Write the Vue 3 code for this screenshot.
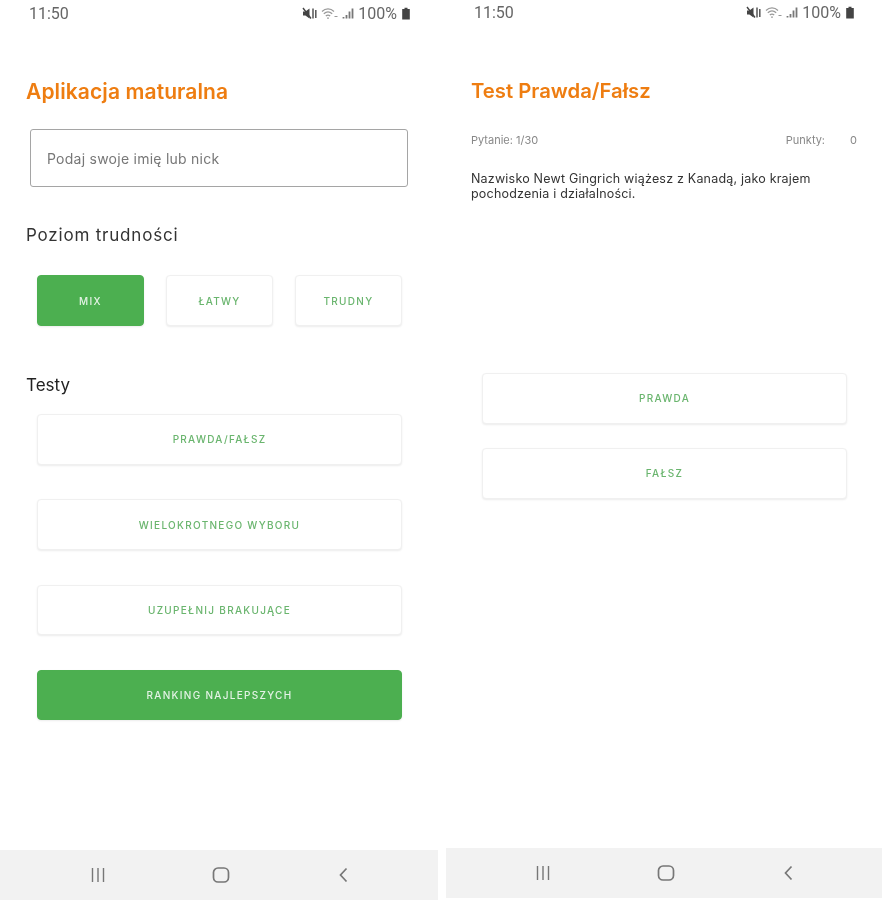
<template>
  <div class="screens">
    <section class="phone phone-left">
      <div class="status-bar">
        <span class="time">11:50</span>
        <div class="status-icons">
          <svg width="15" height="13" viewBox="0 0 15 13"><path d="M1 4.500h2.400L7.500 1.500v10L3.400 8.500H1z" fill="#444"/><path d="M1 1l8 10.500" stroke="#444" stroke-width="1.400"/><path d="M11 1.500v10M13.800 3v8" stroke="#555" stroke-width="1.500"/></svg>
          <svg width="17" height="13" viewBox="0 0 17 13" fill="none" stroke="#999"><path d="M1 4.500C4.500 1 9.500 1 13 4.500M2.800 6.800c2.600-2.400 5.800-2.400 8.400 0M4.800 9c1.400-1.200 3-1.200 4.400 0" stroke-width="1.200"/><path d="M7 11.800v-1.200" stroke-width="1.800"/><path d="M13.500 9.500h3" stroke-width="1"/></svg>
          <svg width="12" height="13" viewBox="0 0 12 13"><path d="M1.500 11.500V10M4.500 11.500V8M7.500 11.500V4.500M10.500 11.500V1.500" stroke="#777" stroke-width="1.800"/></svg>
          <span class="battery-label">100%</span>
          <svg width="10" height="13" viewBox="0 0 10 13"><path d="M3.500.8h3V2h2.300v10.500H1.200V2h2.300z" fill="#444"/></svg>
        </div>
      </div>

      <h1 class="title">Aplikacja maturalna</h1>
      <div class="nick-input">Podaj swoje imię lub nick</div>

      <h2 class="label label-level">Poziom trudności</h2>
      <div class="levels">
        <button v-for="level in levels" :key="level" class="btn" :class="{ filled: level === 'MIX' }">{{ level }}</button>
      </div>

      <h2 class="label label-tests">Testy</h2>
      <div class="tests">
        <button v-for="test in tests" :key="test" class="btn">{{ test }}</button>
        <button class="btn filled">RANKING NAJLEPSZYCH</button>
      </div>

      <nav class="nav-bar">
        <svg width="18" height="16" viewBox="0 0 18 16" fill="none" stroke="#777" stroke-width="1.400"><path d="M3.500 1v14M9 1v14M14.500 1v14"/></svg>
        <svg width="18" height="16" viewBox="0 0 18 16" fill="none" stroke="#777" stroke-width="1.700"><rect x="1.500" y="1" width="15" height="14" rx="4.500"/></svg>
        <svg width="18" height="16" viewBox="0 0 18 16" fill="none" stroke="#777" stroke-width="1.700"><path d="M11.500 1.500L5.500 8l6 6.500"/></svg>
      </nav>
    </section>

    <section class="phone phone-right">
      <div class="status-bar">
        <span class="time">11:50</span>
        <div class="status-icons">
          <svg width="15" height="13" viewBox="0 0 15 13"><path d="M1 4.500h2.400L7.500 1.500v10L3.400 8.500H1z" fill="#444"/><path d="M1 1l8 10.500" stroke="#444" stroke-width="1.400"/><path d="M11 1.500v10M13.800 3v8" stroke="#555" stroke-width="1.500"/></svg>
          <svg width="17" height="13" viewBox="0 0 17 13" fill="none" stroke="#999"><path d="M1 4.500C4.500 1 9.500 1 13 4.500M2.800 6.800c2.600-2.400 5.800-2.400 8.400 0M4.800 9c1.400-1.200 3-1.200 4.400 0" stroke-width="1.200"/><path d="M7 11.800v-1.200" stroke-width="1.800"/><path d="M13.500 9.500h3" stroke-width="1"/></svg>
          <svg width="12" height="13" viewBox="0 0 12 13"><path d="M1.500 11.500V10M4.500 11.500V8M7.500 11.500V4.500M10.500 11.500V1.500" stroke="#777" stroke-width="1.800"/></svg>
          <span class="battery-label">100%</span>
          <svg width="10" height="13" viewBox="0 0 10 13"><path d="M3.500.8h3V2h2.300v10.500H1.200V2h2.300z" fill="#444"/></svg>
        </div>
      </div>

      <h1 class="title">Test Prawda/Fałsz</h1>
      <div class="quiz-meta">
        <span>Pytanie: 1/30</span>
        <span class="score"><span>Punkty:</span><span>0</span></span>
      </div>
      <p class="question">Nazwisko Newt Gingrich wiążesz z Kanadą, jako krajem pochodzenia i działalności.</p>

      <div class="answers">
        <button class="btn">PRAWDA</button>
        <button class="btn">FAŁSZ</button>
      </div>

      <nav class="nav-bar">
        <svg width="18" height="16" viewBox="0 0 18 16" fill="none" stroke="#777" stroke-width="1.400"><path d="M3.500 1v14M9 1v14M14.500 1v14"/></svg>
        <svg width="18" height="16" viewBox="0 0 18 16" fill="none" stroke="#777" stroke-width="1.700"><rect x="1.500" y="1" width="15" height="14" rx="4.500"/></svg>
        <svg width="18" height="16" viewBox="0 0 18 16" fill="none" stroke="#777" stroke-width="1.700"><path d="M11.500 1.500L5.500 8l6 6.500"/></svg>
      </nav>
    </section>
  </div>
</template>

<script setup>
const levels = ['MIX', 'ŁATWY', 'TRUDNY']
const tests = ['PRAWDA/FAŁSZ', 'WIELOKROTNEGO WYBORU', 'UZUPEŁNIJ BRAKUJĄCE']
</script>

<style scoped>
.screens {
  display: flex;
  justify-content: space-between;
  width: 882px;
  height: 900px;
  overflow: hidden;
  background: #fff;
  font-family: Inter, "Open Sans", sans-serif;
  filter: blur(0.5px);
}

.phone {
  display: flex;
  flex-direction: column;
  height: 900px;
}

.phone-left {
  width: 438px;
}

.phone-right {
  width: 436px;
}

.status-bar {
  display: flex;
  justify-content: space-between;
  align-items: center;
  height: 27px;
  padding: 0 27px 0 29px;
  color: #666;
  font-family: Roboto, sans-serif;
  font-size: 16px;
}

.phone-right .status-bar {
  height: 25px;
  padding: 0 27px 0 28px;
}

.status-icons {
  display: flex;
  align-items: center;
  gap: 4px;
}

.title {
  margin: 52px 0 0 26px;
  color: #ee7d11;
  font-size: 21px;
  font-weight: 600;
  line-height: 26px;
  letter-spacing: 0.1px;
}

.phone-right .title {
  margin: 53px 0 0 25px;
  font-size: 20.3px;
  letter-spacing: 0;
}

.nick-input {
  display: flex;
  align-items: center;
  height: 58px;
  box-sizing: border-box;
  margin: 24px 30px 0;
  padding-left: 16px;
  border: 1px solid #a5a5a5;
  border-radius: 3px;
  color: #777;
  font-size: 14px;
  letter-spacing: 0.25px;
}

.label {
  margin: 0 0 0 26px;
  color: #333;
  font-size: 17px;
  font-weight: 400;
  line-height: 20px;
}

.label-level {
  margin-top: 38px;
  letter-spacing: 0.8px;
}

.label-tests {
  margin-top: 49px;
  color: #222;
}

.levels {
  display: flex;
  gap: 22px;
  margin: 30px 36px 0 37px;
}

.levels .btn {
  flex: 1;
  height: 51px;
}

.tests {
  display: flex;
  flex-direction: column;
  gap: 34.8px;
  margin: 19px 36px 0 37px;
}

.btn {
  height: 50.5px;
  padding: 0;
  border: 1px solid #f0f0f0;
  border-radius: 4px;
  background: #fff;
  box-shadow: 0 1px 2px rgba(0, 0, 0, 0.08);
  color: #6ab56e;
  font-family: Inter, "Open Sans", sans-serif;
  font-size: 10px;
  font-weight: 500;
  letter-spacing: 1.3px;
}

.btn.filled {
  border-color: #4caf50;
  background: #4caf50;
  color: #e4f3e5;
}

.quiz-meta {
  display: flex;
  justify-content: space-between;
  margin: 29px 25px 0;
  color: #888;
  font-size: 11px;
  line-height: 14px;
}

.score {
  display: flex;
  gap: 25px;
}

.question {
  margin: 24px 25px 0;
  color: #333;
  font-size: 12.5px;
  line-height: 15px;
  letter-spacing: 0.2px;
}

.answers {
  display: flex;
  flex-direction: column;
  gap: 24.5px;
  margin: 172px 35px 0 36px;
}

.nav-bar {
  display: flex;
  justify-content: center;
  align-items: center;
  gap: 105px;
  margin-top: auto;
  height: 50px;
  padding-left: 3px;
  flex-shrink: 0;
  background: #f2f2f2;
}

.phone-right .nav-bar {
  margin-bottom: 2px;
}
</style>
